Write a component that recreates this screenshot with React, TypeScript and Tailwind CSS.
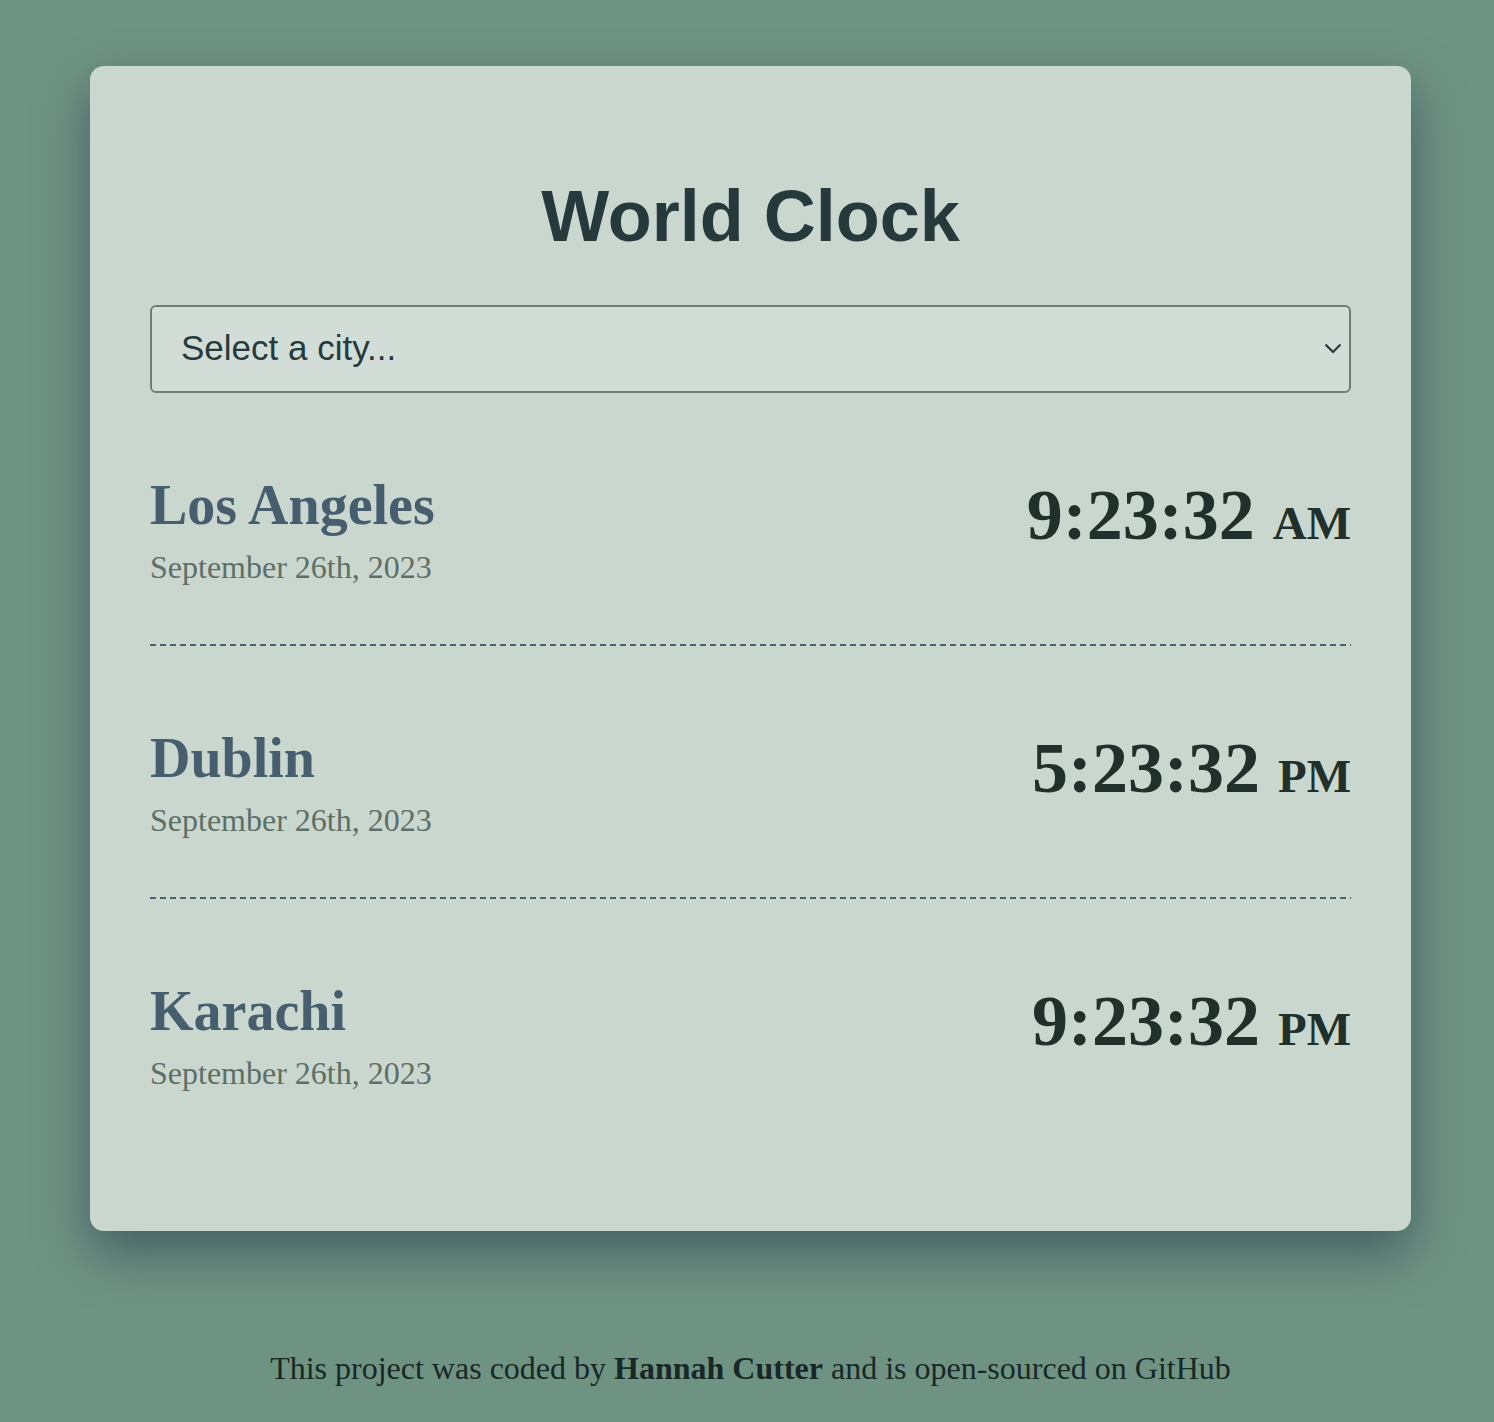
import React from 'react'

const CITIES = [
  { name: 'Los Angeles', date: 'September 26th, 2023', time: '9:23:32', ampm: 'AM' },
  { name: 'Dublin', date: 'September 26th, 2023', time: '5:23:32', ampm: 'PM' },
  { name: 'Karachi', date: 'September 26th, 2023', time: '9:23:32', ampm: 'PM' },
]

export default function App() {
  return (
    <div className="min-h-[1422px] bg-[#6f9383] pt-[66px] pl-[90px] pr-[83px] font-['Liberation_Serif',serif]">
      <div className="rounded-[14px] bg-[#cad7cf] px-[60px] pt-[109px] pb-[81px] shadow-[0_22px_50px_rgba(40,62,78,0.6)]">
        <h1 className="text-center font-['Liberation_Sans',Arial,sans-serif] text-[72px] font-bold leading-[1.149] text-[#263a3c]">
          World Clock
        </h1>

        <div className="relative mt-[47px]">
          <select
            defaultValue=""
            className="block h-[88px] w-full appearance-none rounded-[6px] border-2 border-[#707d77] bg-[#d3ddd7] pl-[29px] font-['Liberation_Sans',Arial,sans-serif] text-[35px] text-[#263a3c] outline-none"
          >
            <option value="">Select a city...</option>
            <option value="paris">Paris</option>
            <option value="tokyo">Tokyo</option>
            <option value="sydney">Sydney</option>
          </select>
          <svg
            className="pointer-events-none absolute right-[9px] top-[38px]"
            width="18"
            height="11"
            viewBox="0 0 18 11"
            fill="none"
          >
            <path d="M1.5 1.5 L9 9 L16.5 1.5" stroke="#263a3c" strokeWidth="2.2" />
          </svg>
        </div>

        <div>
          {CITIES.map((c, i) => (
            <div key={c.name}>
              <div className="flex items-start justify-between pt-[82px] pb-[59px]">
                <div>
                  <div className="text-[56px] font-bold leading-[61px] text-[#465e6e]">{c.name}</div>
                  <div className="mt-[13px] text-[32px] leading-[36px] text-[#5e6f67]">{c.date}</div>
                </div>
                <div className="whitespace-nowrap text-[72px] font-bold leading-[80px] text-[#21302a]">
                  {c.time} <span className="text-[47px]">{c.ampm}</span>
                </div>
              </div>
              {i < CITIES.length - 1 && (
                <div className="h-[2px] bg-[repeating-linear-gradient(to_right,#4a6270_0_6px,transparent_6px_10px)]" />
              )}
            </div>
          ))}
        </div>
      </div>

      <p className="mt-[113px] text-center text-[32px] text-[#182826]">
        This project was coded by <strong className="font-bold">Hannah Cutter</strong> and is open-sourced on GitHub
      </p>
    </div>
  )
}
